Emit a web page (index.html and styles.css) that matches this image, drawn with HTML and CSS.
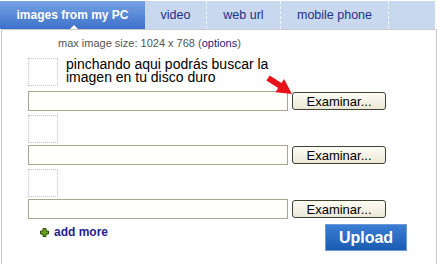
FILE: index.html
```html
<!DOCTYPE html>
<html lang="es">
<head>
  <meta charset="UTF-8">
  <title>Upload images</title>
  <link rel="stylesheet" href="styles.css">
</head>
<body>
  <div class="uploader">
    <ul class="tabs">
      <li class="tab active">images from my PC</li>
      <li class="tab tab-video">video</li>
      <li class="tab tab-url">web url</li>
      <li class="tab tab-phone">mobile phone</li>
      <li class="tab filler"></li>
    </ul>

    <div class="panel">
      <p class="limits">max image size: 1024 x 768 (<a href="#">options</a>)</p>

      <div class="file-row">
        <div class="thumb-line">
          <div class="thumb"></div>
          <p class="hint">pinchando aqui podrás buscar la<br>imagen en tu disco duro</p>
        </div>
        <div class="picker">
          <input type="text" class="path">
          <button class="browse">Examinar...</button>
        </div>
      </div>

      <div class="file-row">
        <div class="thumb-line"><div class="thumb"></div></div>
        <div class="picker">
          <input type="text" class="path">
          <button class="browse">Examinar...</button>
        </div>
      </div>

      <div class="file-row">
        <div class="thumb-line"><div class="thumb"></div></div>
        <div class="picker">
          <input type="text" class="path">
          <button class="browse">Examinar...</button>
        </div>
      </div>

      <div class="footer">
        <a href="#" class="add-more">
          <svg width="9" height="9" viewBox="0 0 9 9"><path d="M3 0.5h3v2.5h2.5v3h-2.5v2.5h-3v-2.5h-2.5v-3h2.5z" fill="#6aa31c" stroke="#2c4a08" stroke-width="1"/></svg>
          add more
        </a>
        <button class="upload">Upload</button>
      </div>

      <!-- red annotation arrow -->
      <svg class="arrow" width="30" height="26" viewBox="0 0 30 26">
        <polygon points="4.6,3.5 16.4,11.1 19.1,6.9 27,22 10.5,20.3 13.2,16.1 1.4,8.5" fill="#e8121a"/>
      </svg>
    </div>
  </div>
</body>
</html>
```

FILE: styles.css
```css
body {
  margin: 0;
  background: #fff;
  font-family: "Liberation Sans", Arial, sans-serif;
}

.uploader {
  width: 437px;
  position: relative;
}

.tabs {
  list-style: none;
  margin: 1px 2px 0 0;
  padding: 0;
  display: flex;
  height: 28px;
  background: #c7d8ef;
}

.tab {
  font-size: 12.5px;
  line-height: 28px;
  text-align: center;
  color: #24308a;
  border-right: 1px dashed #f2f6fc;
}

.tab.active {
  width: 145px;
  position: relative;
  font-size: 12px;
  font-weight: bold;
  color: #fff;
  background: linear-gradient(#77a3e4, #3d71c9);
  border-right: none;
}

.tab.active::after {
  content: "";
  position: absolute;
  left: 70px;
  bottom: 0;
  border: 4px solid transparent;
  border-bottom-color: #fff;
  border-top: none;
}

.tab-video { width: 61px; }
.tab-url { width: 73px; }
.tab-phone { width: 107px; }
.filler { flex: 1; border-right: none; }

.panel {
  position: relative;
  margin-left: 1px;
  height: 234px;
  border: 1px solid #cbcbcb;
  border-bottom: none;
  padding-left: 26px;
}

.limits {
  margin: 7px 0 0 30px;
  font-size: 11px;
  line-height: 13px;
  color: #555;
}

.limits a {
  color: #1a2380;
  text-decoration: none;
}

.file-row {
  margin-top: 8px;
}

.file-row + .file-row {
  margin-top: 4px;
}

.thumb-line {
  display: flex;
  align-items: flex-start;
}

.thumb {
  width: 28px;
  height: 26px;
  border: 1px dotted #c4c4c4;
}

.hint {
  margin: 0 0 0 8px;
  padding-bottom: 5px;
  font-size: 14px;
  line-height: 13px;
  color: #000;
}

.picker {
  display: flex;
  align-items: flex-start;
  margin-top: 2px;
}

.path {
  width: 258px;
  height: 18px;
  margin: 0;
  padding: 0;
  border: 1px solid #a7a78d;
  background: #fffffb;
}

.browse {
  margin: 1px 0 0 4px;
  width: 94px;
  height: 18px;
  padding: 0;
  font-family: "Liberation Sans", Arial, sans-serif;
  font-size: 13px;
  color: #000;
  border: 1px solid #3f4230;
  border-radius: 3px;
  background: linear-gradient(#fdfcf5, #ebe8d6);
}

.footer {
  display: flex;
  justify-content: space-between;
  align-items: flex-start;
  width: 367px;
  margin-top: 5px;
  padding-left: 12px;
}

.add-more {
  display: flex;
  align-items: center;
  gap: 5px;
  margin-top: 1px;
  font-size: 12px;
  font-weight: bold;
  color: #1f2392;
  text-decoration: none;
}

.upload {
  width: 82px;
  height: 27px;
  padding: 0;
  font-family: "Liberation Sans", Arial, sans-serif;
  font-size: 16px;
  font-weight: bold;
  color: #fff;
  border: 1px solid #6e9ad8;
  background: linear-gradient(#3c7dd4, #1b5cb3);
}

.arrow {
  position: absolute;
  left: 263px;
  top: 42px;
}
```
